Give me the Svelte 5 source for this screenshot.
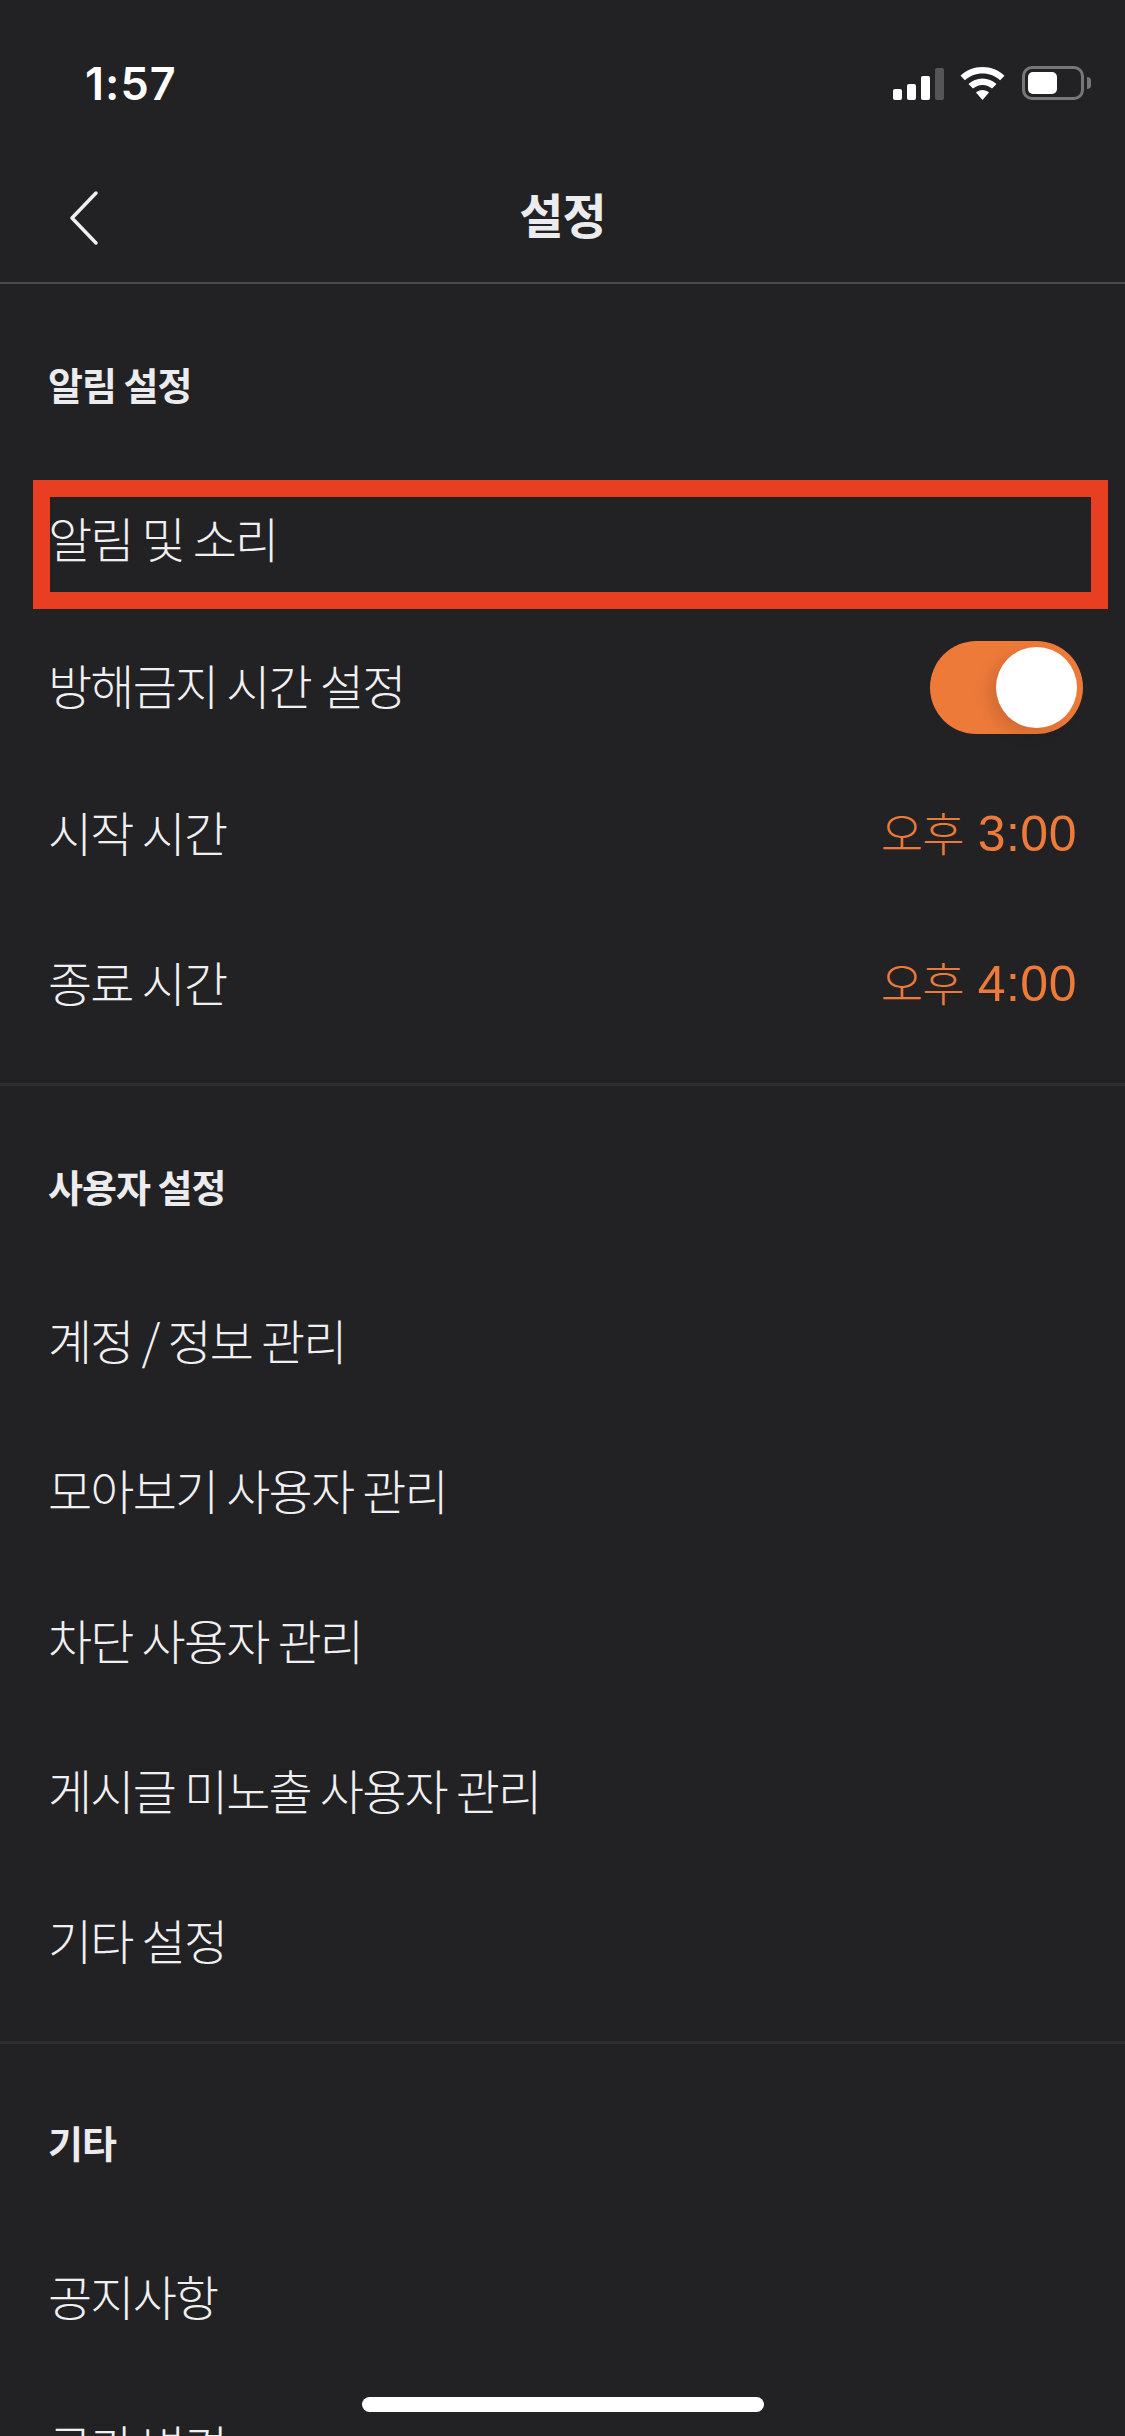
<script lang="ts">
  type Row = { label: string; meridiem?: string; time?: string; toggle?: boolean; boxed?: boolean };
  type Section = { title: string; rows: Row[] };

  const sections: Section[] = [
    {
      title: "알림 설정",
      rows: [
        { label: "알림 및 소리", boxed: true },
        { label: "방해금지 시간 설정", toggle: true },
        { label: "시작 시간", meridiem: "오후", time: "3:00" },
        { label: "종료 시간", meridiem: "오후", time: "4:00" },
      ],
    },
    {
      title: "사용자 설정",
      rows: [
        { label: "계정 / 정보 관리" },
        { label: "모아보기 사용자 관리" },
        { label: "차단 사용자 관리" },
        { label: "게시글 미노출 사용자 관리" },
        { label: "기타 설정" },
      ],
    },
    {
      title: "기타",
      rows: [{ label: "공지사항" }, { label: "국가 변경" }],
    },
  ];
</script>

<div class="screen">
  <header class="status">
    <span class="time">1:57</span>
    <div class="status-icons">
      <div class="signal" aria-hidden="true">
        <i class="b1"></i><i class="b2"></i><i class="b3"></i><i class="b4"></i>
      </div>
      <svg class="wifi" width="45" height="33" viewBox="0 0 45 33" aria-hidden="true">
        <path d="M22.5 0C14 0 6.3 3.3.5 8.7l4.4 4.6C9.5 9 15.7 6.4 22.5 6.4S35.500 9 40.100 13.300l4.400-4.600C38.700 3.300 31 0 22.500 0z" fill="#fff"/>
        <path d="M22.500 11.500c-5.400 0-10.300 2.100-14 5.500l4.500 4.600c2.500-2.300 5.800-3.700 9.500-3.700s7 1.400 9.500 3.700l4.500-4.600c-3.700-3.400-8.600-5.500-14-5.500z" fill="#fff"/>
        <path d="M22.500 23c-2.500 0-4.800 1-6.500 2.500L22.500 33 29 25.500C27.300 24 25 23 22.500 23z" fill="#fff"/>
      </svg>
      <div class="battery" aria-hidden="true"><div class="charge"></div></div>
      <div class="nub" aria-hidden="true"></div>
    </div>
  </header>

  <nav class="nav">
    <svg class="back" width="30" height="56" viewBox="0 0 30 56" aria-hidden="true">
      <path d="M27 3 3 28l24 25" fill="none" stroke="#f0f0f2" stroke-width="3.500" stroke-linecap="round" stroke-linejoin="round"/>
    </svg>
    <h1>설정</h1>
  </nav>

  {#each sections as section}
    <section class="section">
      <h2>{section.title}</h2>
      {#each section.rows as row}
        <div class="row">
          {#if row.boxed}<div class="box"></div>{/if}
          <span class="label">{row.label}</span>
          {#if row.toggle}
            <div class="toggle"><div class="knob"></div></div>
          {:else if row.time}
            <span class="value">{row.meridiem} <span class="digits">{row.time}</span></span>
          {/if}
        </div>
      {/each}
    </section>
  {/each}

  <div class="home"></div>
</div>

<style>
  :global(body) {
    background: #222224;
  }
  .screen {
    position: relative;
    width: 1125px;
    height: 2436px;
    overflow: hidden;
    background: #222224;
    color: #f2f2f4;
    font-family: "Noto Sans CJK KR", "Noto Sans", sans-serif;
  }
  .status {
    height: 166px;
    display: flex;
    justify-content: space-between;
    align-items: center;
    padding: 0 34px 0 85px;
    box-sizing: border-box;
  }
  .time {
    font-family: Inter, sans-serif;
    font-size: 45px;
    font-weight: 600;
    letter-spacing: 1px;
    color: #fff;
  }
  .status-icons {
    display: flex;
    align-items: center;
  }
  .signal {
    display: flex;
    align-items: flex-end;
    gap: 5px;
    height: 33px;
    margin-right: 16px;
  }
  .signal i {
    display: block;
    width: 9px;
    background: #fff;
    border-radius: 2px;
  }
  .b1 { height: 11px; }
  .b2 { height: 16px; }
  .b3 { height: 24px; }
  .signal .b4 { height: 32px; background: #555557; }
  .wifi { margin-right: 17px; }
  .battery {
    width: 62px;
    height: 34px;
    box-sizing: border-box;
    border: 3px solid #77777a;
    border-radius: 10px;
    padding: 3px;
  }
  .charge {
    width: 29px;
    height: 100%;
    background: #fff;
    border-radius: 5px;
  }
  .nub {
    width: 4px;
    height: 12px;
    margin-left: 3px;
    background: #77777a;
    border-radius: 0 6px 6px 0;
  }
  .nav {
    position: relative;
    height: 116px;
    display: flex;
    align-items: center;
    justify-content: center;
    border-bottom: 2px solid #4a4a4c;
  }
  .back {
    position: absolute;
    left: 69px;
    top: 24px;
  }
  h1 {
    margin: 0 0 22px;
    font-size: 48px;
    font-weight: 700;
    letter-spacing: -1px;
    color: #ececee;
  }
  .section {
    padding: 70px 0 24px;
    border-bottom: 3px solid #2d2d2f;
  }
  .section:nth-of-type(3) {
    padding-top: 68px;
  }
  h2 {
    margin: 0 0 47px;
    padding-left: 48px;
    height: 64px;
    line-height: 60px;
    font-size: 38px;
    font-weight: 700;
    letter-spacing: -1px;
    color: #ececee;
  }
  .row {
    position: relative;
    height: 150px;
    display: flex;
    align-items: center;
    justify-content: space-between;
    padding: 0 42px 0 48px;
  }
  /* first block sits slightly tighter than the others */
  .section:first-of-type .row:nth-of-type(n + 2):nth-of-type(-n + 3) {
    margin-top: -3px;
  }
  .label {
    padding-bottom: 6px;
    font-size: 48px;
    font-weight: 300;
    letter-spacing: -1.800px;
    color: #f0f0f2;
  }
  .value {
    padding-bottom: 6px;
    font-size: 46px;
    font-weight: 300;
    color: #ee7a3a;
    word-spacing: 5px;
    margin-right: 6px;
    letter-spacing: -1px;
  }
  .digits {
    font-family: "Liberation Sans", sans-serif;
    font-size: 50px;
    font-weight: 400;
    letter-spacing: 0.500px;
  }
  .box {
    position: absolute;
    left: 33px;
    right: 17px;
    top: 15px;
    height: 129px;
    box-sizing: border-box;
    border: 17px solid #e83e22;
  }
  .toggle {
    width: 153px;
    height: 93px;
    padding: 6px;
    box-sizing: border-box;
    display: flex;
    justify-content: flex-end;
    background: #ee7a3a;
    border-radius: 47px;
  }
  .knob {
    width: 81px;
    height: 81px;
    background: #fff;
    border-radius: 50%;
    box-shadow: -8px 6px 16px rgba(0, 0, 0, 0.12);
  }
  .home {
    position: absolute;
    left: 362px;
    top: 2397px;
    width: 402px;
    height: 15px;
    background: #fff;
    border-radius: 8px;
  }
</style>
